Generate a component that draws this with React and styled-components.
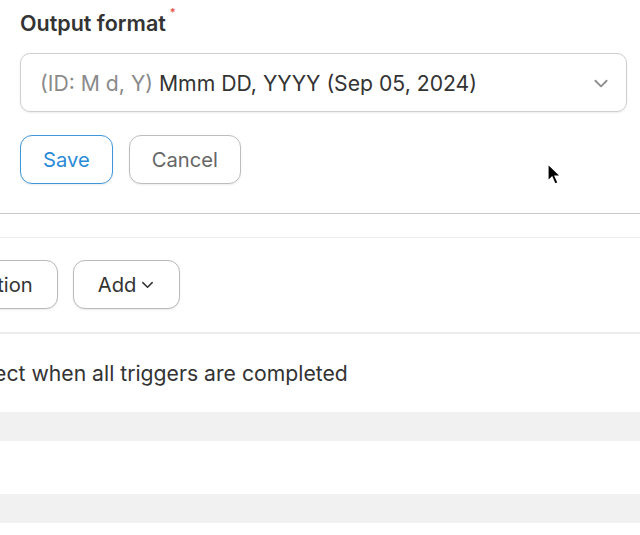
import React from "react";
import styled, { createGlobalStyle } from "styled-components";

const GlobalStyle = createGlobalStyle`
  html, body {
    margin: 0;
    padding: 0;
    background: #ffffff;
    font-family: Inter, "Liberation Sans", Arial, sans-serif;
    color: #333333;
  }
  * { box-sizing: border-box; }
`;

const Page = styled.div`
  position: relative;
  width: 640px;
  height: 535px;
  overflow: hidden;
  background: #fff;
`;

const FormSection = styled.div`
  padding: 9px 13px 0 20px;
`;

const Label = styled.div`
  font-size: 21.5px;
  font-weight: 600;
  color: #333;
  line-height: 28px;
  height: 28px;
  display: flex;
  align-items: flex-start;
`;

const Required = styled.span`
  color: #e5534b;
  font-size: 11px;
  line-height: 11px;
  margin-left: 4px;
  margin-top: -2px;
`;

const Select = styled.div`
  margin-top: 16px;
  height: 59px;
  border: 1px solid #cfcfcf;
  border-radius: 10px;
  box-shadow: 0 1px 2px rgba(0, 0, 0, 0.08);
  display: flex;
  align-items: center;
  justify-content: space-between;
  padding: 0 16px 0 19px;
  font-size: 21.2px;
`;

const Hint = styled.span`
  color: #8a8a8a;
`;

const Value = styled.span`
  color: #333;
`;

const Actions = styled.div`
  display: flex;
  gap: 16px;
  margin-top: 23px;
`;

const Button = styled.button`
  height: 49px;
  padding: 0 22px;
  border-radius: 12px;
  background: #fff;
  font-family: inherit;
  font-size: 20.2px;
  border: 1px solid ${({ $primary }) => ($primary ? "#3d97dc" : "#bdbdbd")};
  color: ${({ $primary }) => ($primary ? "#2a8ad6" : "#666")};
  box-shadow: 0 1px 2px rgba(0, 0, 0, 0.08);
  display: flex;
  align-items: center;
  gap: 4px;
`;

const Divider = styled.div`
  margin-top: 29px;
  height: 1px;
  background: #c8c8c8;
`;

const Toolbar = styled.div`
  margin-top: 23px;
  border-top: 1px solid #ececec;
  border-bottom: 2px solid #ececec;
  padding: 22px 0 23px;
  display: flex;
  gap: 15px;
  margin-left: -95px;
`;

const ToolButton = styled(Button)`
  color: #333;
  border-color: #b9b9b9;
  padding: 0 24px;
`;

const Note = styled.div`
  font-size: 21.2px;
  color: #333;
  height: 78px;
  line-height: 78px;
  white-space: nowrap;
  margin-left: -37px;
`;

const Stripes = styled.div`
  display: flex;
  flex-direction: column;
`;

const Stripe = styled.div`
  height: ${({ $h }) => $h}px;
  background: ${({ $grey }) => ($grey ? "#f1f1f1" : "#fff")};
`;

const Cursor = styled.svg`
  position: absolute;
  left: 547px;
  top: 163px;
`;

const Chevron = ({ size = 16, color = "#8a8a8a" }) => (
  <svg width={size} height={size} viewBox="0 0 16 16" fill="none">
    <path d="M3 6l5 5 5-5" stroke={color} strokeWidth="1.6" strokeLinecap="round" strokeLinejoin="round" />
  </svg>
);

export default function App() {
  return (
    <Page>
      <GlobalStyle />
      <FormSection>
        <Label>
          Output format<Required>*</Required>
        </Label>
        <Select>
          <span>
            <Hint>(ID: M d, Y)</Hint> <Value>Mmm DD, YYYY (Sep 05, 2024)</Value>
          </span>
          <Chevron size={18} color="#8d8d8d" />
        </Select>
        <Actions>
          <Button $primary>Save</Button>
          <Button>Cancel</Button>
        </Actions>
      </FormSection>
      <Divider />
      <Toolbar>
        <ToolButton>Add action</ToolButton>
        <ToolButton>
          Add <Chevron size={15} color="#333" />
        </ToolButton>
      </Toolbar>
      <Note>Select when all triggers are completed</Note>
      <Stripes>
        <Stripe $grey $h={29} />
        <Stripe $h={53} />
        <Stripe $grey $h={29} />
      </Stripes>
      <Cursor width="14" height="22" viewBox="0 0 14 22">
        <path d="M1 1v17l4-4 3 7 3-1.3-3-6.7h5.5z" fill="#000" stroke="#fff" strokeWidth="1.2" />
      </Cursor>
    </Page>
  );
}
